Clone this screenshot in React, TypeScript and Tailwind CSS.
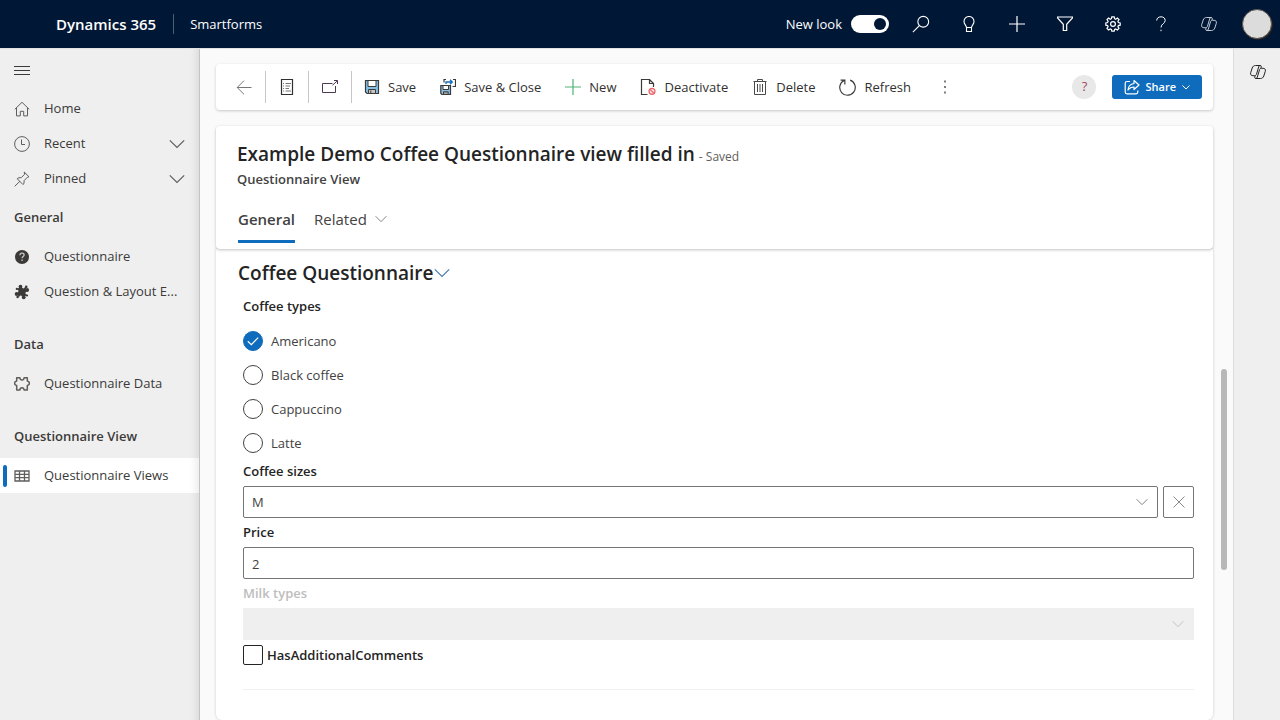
import type { ReactNode } from "react";

type IconProps = { className?: string; children: ReactNode; box?: number };

function Icon({ className = "", children, box = 16 }: IconProps) {
  return (
    <svg
      viewBox={`0 0 ${box} ${box}`}
      className={`shrink-0 ${className}`}
      fill="none"
      stroke="currentColor"
      strokeWidth="1"
      aria-hidden="true"
    >
      {children}
    </svg>
  );
}

function Chevron({ className = "" }: { className?: string }) {
  return (
    <Icon className={className}>
      <path d="M0.8 4.3 8 11.5l7.200-7.200" strokeWidth="1.200" />
    </Icon>
  );
}

function Copilot({ className = "" }: { className?: string }) {
  return (
    <Icon className={className}>
      <path d="M10.800 4.200 11.400 2.800C11.400 1.900 10.800 1.500 10 1.500H5.600C3.900 1.500 2.700 2.400 2.200 4L.7 8.700C.2 10.500 1.100 11.700 2.900 11.700H4.500C5.600 11.700 6.200 11.200 6.500 10.200L8.700 2.800C8.900 2 9.400 1.500 10 1.500" />
      <path d="M5.200 11.800 4.600 13.200C4.600 14.100 5.200 14.500 6 14.500H10.400C12.100 14.500 13.300 13.600 13.800 12L15.300 7.300C15.800 5.500 14.900 4.300 13.100 4.300H11.500C10.400 4.300 9.800 4.800 9.500 5.800L7.300 13.200C7.100 14 6.600 14.500 6 14.500" />
    </Icon>
  );
}

const homeIcon = (
  <Icon className="size-4 text-[#605e5c]">
    <path d="M.8 8.300 8 1.300l7.200 7M2.500 6.900v8h3.800v-4.600h3.400v4.600h3.800v-8" />
  </Icon>
);
const clockIcon = (
  <Icon className="size-4 text-[#605e5c]">
    <circle cx="8" cy="8" r="7.400" />
    <path d="M7.500 3.500v5h3.500" />
  </Icon>
);
const pinIcon = (
  <Icon className="size-4 text-[#605e5c]">
    <path d="m10.200 1 4.800 4.800-1.500.4-3.300 3.300-.3 3.200-1 .8-5.600-5.600.8-1 3.200-.3 3.300-3.300ZM6 10.200.7 15.300" />
  </Icon>
);
const questionIcon = (
  <Icon className="size-4">
    <circle cx="8" cy="8" r="7" fill="#3b3a39" stroke="none" />
    <path d="M5.900 6.200c.1-1.300 1-2 2.100-2 1.200 0 2.100.7 2.100 1.800 0 1.500-2 1.600-2 3.300M8.100 10.500v1.600" stroke="#c8c8c8" strokeWidth="1.300" />
  </Icon>
);
const puzzleIcon = (
  <Icon className="size-4">
    <g stroke="none" fill="#3b3a39">
      <path d="m3.200 4.200 8.600-1 1 8.600-8.600 1Z" />
      <circle cx="6.500" cy="2.600" r="1.900" />
      <circle cx="13.200" cy="6" r="1.900" />
      <circle cx="9.700" cy="13.300" r="1.900" />
      <circle cx="2.600" cy="10" r="1.900" />
      <circle cx="12.200" cy="2.900" r="1.300" />
      <circle cx="3.600" cy="13" r="1.200" />
      <circle cx="2.800" cy="4.900" r="1.100" />
      <circle cx="13" cy="11.500" r="1.100" />
    </g>
    <g stroke="none" fill="#efefef">
      <circle cx="9.400" cy="3.300" r="1.100" />
      <circle cx="12.500" cy="9.200" r="1.100" />
      <circle cx="6.700" cy="12.700" r="1.100" />
      <circle cx="3.400" cy="7" r="1.100" />
    </g>
  </Icon>
);
const puzzleOutlineIcon = (
  <Icon className="size-4 text-[#605e5c]">
    <path
      d="M2.700 1.700h3.200c.1 1.500.8 2.300 2.100 2.300s2-.8 2.100-2.300h3.200v3.300c1.300.2 2.100 1 2.100 2.200s-.8 2-2.100 2.200v4.500h-3.200c-.1-1.400-.8-2.200-2.100-2.200s-2 .8-2.100 2.200H2.700V9.400C1.400 9.200.6 8.400.6 7.200s.8-2 2.100-2.200Z"
      strokeWidth="1.500"
      strokeLinejoin="round"
    />
  </Icon>
);
const tableIcon = (
  <Icon className="size-4 text-[#605e5c]">
    <path d="M1 3h14v10H1ZM1 6.300h14M1 9.700h14M5.500 3v10M10.500 3v10" strokeWidth="1.300" />
  </Icon>
);

type NavItem = { label: string; icon: ReactNode; expandable?: boolean; active?: boolean };

const navGroups: { title?: string; items: NavItem[] }[] = [
  {
    items: [
      { label: "Home", icon: homeIcon },
      { label: "Recent", icon: clockIcon, expandable: true },
      { label: "Pinned", icon: pinIcon, expandable: true },
    ],
  },
  {
    title: "General",
    items: [
      { label: "Questionnaire", icon: questionIcon },
      { label: "Question & Layout E...", icon: puzzleIcon },
    ],
  },
  { title: "Data", items: [{ label: "Questionnaire Data", icon: puzzleOutlineIcon }] },
  { title: "Questionnaire View", items: [{ label: "Questionnaire Views", icon: tableIcon, active: true }] },
];

function TopBar() {
  return (
    <header className="flex h-12 shrink-0 items-center bg-[#001736] text-white">
      <a href="#home" className="ml-14 text-[15px] font-semibold">Dynamics 365</a>
      <span className="ml-[17px] h-5 w-px bg-[#4d5d74]" />
      <a href="#app" className="ml-4 pt-[2px] text-[13px]">Smartforms</a>
      <div className="ml-auto flex items-center">
        <label htmlFor="new-look" className="mr-[9px] pt-[2px] text-[13px]">New look</label>
        <span className="relative flex">
          <input
            id="new-look"
            type="checkbox"
            role="switch"
            defaultChecked
            className="h-[18px] w-[38px] appearance-none rounded-full bg-white"
          />
          <span className="pointer-events-none absolute top-[3px] right-[3px] size-3 rounded-full bg-[#001736]" />
        </span>
        <div className="ml-2 flex">
          <button aria-label="Search" className="flex h-12 w-12 items-center justify-center">
            <Icon className="size-[18px]"><circle cx="10" cy="6" r="4.800" /><path d="M6.500 9.500.8 15.200" /></Icon>
          </button>
          <button aria-label="Insights" className="flex h-12 w-12 items-center justify-center">
            <Icon className="size-4">
              <path d="M5.500 11.500c0-2-2.500-3-2.500-6a5 5 0 0 1 10 0c0 3-2.500 4-2.500 6ZM5.500 11.500v4h5v-4" strokeWidth="1.100" />
            </Icon>
          </button>
          <button aria-label="Add" className="flex h-12 w-12 items-center justify-center">
            <Icon className="size-4"><path d="M8 0v16M0 8h16" strokeWidth="1.200" /></Icon>
          </button>
          <button aria-label="Filter" className="flex h-12 w-12 items-center justify-center">
            <Icon className="size-4"><path d="M.5 1h15v1L9.700 8.300v6.200H6.300V8.300L.5 2Z" strokeWidth="1.200" /></Icon>
          </button>
          <button aria-label="Settings" className="flex h-12 w-12 items-center justify-center">
            <Icon className="size-4">
              <path d="M6.800.8h2.400l.4 1.900 1.100.5 1.700-1.100 1.600 1.600-1.100 1.700.5 1.100 1.800.4v2.300l-1.800.4-.5 1.100 1.100 1.700-1.600 1.600-1.700-1.100-1.100.5-.4 1.800H6.800l-.4-1.800-1.100-.5L3.600 14 2 12.400l1.100-1.700-.5-1.100-1.800-.4V6.900l1.800-.4.5-1.100L2 3.700l1.600-1.600 1.700 1.100 1.100-.5Z" strokeWidth="1.200" />
              <circle cx="8" cy="8" r="2.400" strokeWidth="1.200" />
            </Icon>
          </button>
          <button aria-label="Help" className="flex h-12 w-12 items-center justify-center">
            <Icon className="size-4">
              <path d="M3.700 4.500C3.800 2.200 5.500.8 8 .8s4.200 1.500 4.200 3.700C12.200 7.800 8 7.600 8 11.500M8 13.700v1.500" />
            </Icon>
          </button>
          <button aria-label="Copilot" className="flex h-12 w-12 items-center justify-center">
            <Copilot className="size-4 text-[#c3c9d2]" />
          </button>
          <button aria-label="Account" className="flex h-12 w-[47px] items-center justify-center">
            <span className="size-[30px] rounded-full border border-[#56534d] bg-[#dcdcdc] shadow-[1px_1px_0_0_#222222]" />
          </button>
        </div>
      </div>
    </header>
  );
}

function Sidebar() {
  return (
    <nav className="w-[200px] shrink-0 overflow-hidden border-r border-[#c4c4c4] bg-[#efefef] text-[13px] text-[#3b3a39] shadow-[inset_-12px_0_10px_-10px_#00000018]">
      <button aria-label="Collapse navigation" className="flex h-[42px] items-center px-[14px]">
        <Icon className="size-4"><path d="M0 4.500h16M0 8.500h16M0 12.500h16" /></Icon>
      </button>
      {navGroups.map((group, i) => (
        <section key={i} className={i > 1 ? "mt-[14px]" : ""}>
          {group.title && <h2 className="flex h-[43px] items-center px-[14px] font-semibold">{group.title}</h2>}
          <ul>
            {group.items.map((item) => (
              <li key={item.label}>
                <a
                  href="#nav"
                  className={`relative flex h-[35px] items-center gap-[14px] px-[14px] ${
                    item.active ? "bg-white shadow-[inset_-12px_0_10px_-10px_#00000018]" : ""
                  }`}
                >
                  {item.active && <span className="absolute left-[3px] h-[22px] w-1 rounded-sm bg-[#0f6cbd]" />}
                  {item.icon}
                  <span className="flex-1 whitespace-nowrap">{item.label}</span>
                  {item.expandable && <Chevron className="size-4 text-[#605e5c]" />}
                </a>
              </li>
            ))}
          </ul>
        </section>
      ))}
    </nav>
  );
}

const commands: { label: string; icon: ReactNode }[] = [
  {
    label: "Save",
    icon: (
      <Icon className="size-4">
        <path d="M1.500 1.500h13v13H3l-1.500-1.500Z" fill="#86bfe6" stroke="#3b3a39" strokeWidth="1.200" />
        <path d="M4 1.500h8v6H4Z" fill="#fff" stroke="#3b3a39" />
        <path d="M4.500 14.500v-4h7v4Z" fill="#c8c6c4" stroke="#3b3a39" />
        <path d="M6.800 11.500v3" stroke="#3b3a39" />
      </Icon>
    ),
  },
  {
    label: "Save & Close",
    icon: (
      <Icon className="size-4">
        <path d="M4 3.500V.5h2M13 .5h2.500v7H12.500" stroke="#3b3a39" strokeWidth="1.200" />
        <path d="M6 5V3h6M10 .8 12.300 3 10 5.200" stroke="#0f6cbd" strokeWidth="1.300" />
        <path d="M.8 6.500h9.700v9H2L.8 14.400Z" fill="#86bfe6" stroke="#3b3a39" strokeWidth="1.200" />
        <path d="M3 6.500h5.500v4H3Z" fill="#fff" stroke="#3b3a39" />
        <path d="M3.500 15.500v-2.700h4.700v2.700Z" fill="#a6a4a2" stroke="#3b3a39" />
      </Icon>
    ),
  },
  { label: "New", icon: <Icon className="size-4 text-[#4fb274]"><path d="M8 0v16M0 8h16" strokeWidth="1.200" /></Icon> },
  {
    label: "Deactivate",
    icon: (
      <Icon className="size-4">
        <path d="M7.500 15.500h-6V.5h8l4 4V8M9.500.5v4h4" stroke="#3b3a39" strokeWidth="1.200" />
        <circle cx="12" cy="12.300" r="3" stroke="#ea6468" strokeWidth="1.200" fill="#fbe0e1" />
        <path d="m10 10.300 4 4" stroke="#ea6468" strokeWidth="1.200" />
      </Icon>
    ),
  },
  {
    label: "Delete",
    icon: (
      <Icon className="size-4">
        <path d="M1.500 2.500h13M5.500 2.500V.5h5v2M2.500 2.500v13h11v-13M5.500 5v8M8 5v8M10.500 5v8" stroke="#4a4948" />
      </Icon>
    ),
  },
  {
    label: "Refresh",
    icon: (
      <Icon className="size-[17px]">
        <path d="M10.500 1.100a7.300 7.300 0 1 1-5.700.3M1.500 1.100h4v4" stroke="#3b3a39" strokeWidth="1.100" />
      </Icon>
    ),
  },
];

function CommandBar() {
  return (
    <div className="flex h-[46px] shrink-0 items-center rounded bg-white pr-[11px] pl-[7px] text-[13px] text-[#323130] shadow-[0_1px_3px_#00000033]">
      <button aria-label="Back" className="flex h-8 w-[42px] items-center justify-center text-[#797775]">
        <Icon className="size-4"><path d="M15.500 8.500H1M8 1.700 1.200 8.500 8 15.300" /></Icon>
      </button>
      <button aria-label="Show form selector" className="flex h-8 w-[43px] items-center justify-center border-l border-[#c8c6c4]">
        <Icon className="size-4">
          <path d="M2.500.5h11v15h-11Z" strokeWidth="1.200" />
          <path d="M4 4.500h1M6.500 4.500H12M4 7h1M6.500 7H11M4 9.500h1M6.500 9.500H10M4 12h1M6.500 12H12" stroke="#797775" />
        </Icon>
      </button>
      <button aria-label="Open in new window" className="flex h-8 w-[43px] items-center justify-center border-l border-[#c8c6c4]">
        <Icon className="size-4 text-[#4d3a52]">
          <path d="M10.500 4.500h-10v9h13V7M10.500 6.200l5-4.500M12 1.500h3.500V5" />
        </Icon>
      </button>
      <div className="flex h-8 items-center border-l border-[#c8c6c4]">
        {commands.map((c) => (
          <button key={c.label} className="flex items-center gap-2 px-3 whitespace-nowrap">
            {c.icon}
            <span className="pt-[2px]">{c.label}</span>
          </button>
        ))}
      </div>
      <button aria-label="More commands" className="flex h-8 w-11 items-center justify-center">
        <Icon className="size-4 text-[#605e5c]">
          <path d="M8 1.500v2M8 7v2M8 12.500v2" strokeWidth="1.600" />
        </Icon>
      </button>
      <button aria-label="Help" className="ml-auto flex size-6 items-center justify-center rounded-full bg-[#e8e8e8] text-[13px] text-[#a4465c]">
        ?
      </button>
      <button className="ml-4 flex h-6 items-center rounded-[3px] bg-[#0f6cbd] px-3 text-[11px] font-semibold text-white">
        <Icon className="mr-[5px] size-4">
          <path d="M6 2.500H3A1.800 1.800 0 0 0 1.200 4.300V13A1.800 1.800 0 0 0 3 14.800h9A1.800 1.800 0 0 0 13.800 13v-1.500" strokeWidth="1.200" />
          <path d="M10 1.500 15 6l-5 4.500V8C7.500 8 5.500 9 4 11c.3-3.500 2.300-6 6-6.500Z" strokeLinejoin="round" strokeWidth="1.200" />
        </Icon>
        <span className="pt-px">Share</span>
        <Icon className="ml-[6px] size-2" box={8}><path d="m.5 2.500L4 6l3.500-3.500" /></Icon>
      </button>
    </div>
  );
}

function RecordHeader() {
  return (
    <div className="relative mt-4 flex h-[123px] shrink-0 flex-col rounded bg-white px-[21px] pt-[14px] shadow-[0_1px_3px_#00000040]">
      <div className="flex items-baseline gap-1">
        <h1 className="text-[19px] leading-[28px] font-semibold text-[#242424]">Example Demo Coffee Questionnaire view filled in</h1>
        <span className="text-[12px] text-[#605e5c]">- Saved</span>
      </div>
      <p className="text-[13px] leading-[22px] font-semibold text-[#424242]">Questionnaire View</p>
      <div role="tablist" className="mt-auto mb-[6px] flex gap-[19px] px-px text-[15px] text-[#424242]">
        <button role="tab" aria-selected="true" className="h-[35px] border-b-[3px] border-[#0f6cbd] pb-[10px] font-semibold">
          General
        </button>
        <button role="tab" aria-selected="false" className="flex h-[35px] items-center gap-2 border-b-[3px] border-transparent pb-[10px]">
          Related
          <Chevron className="size-3 text-[#797775]" />
        </button>
      </div>
    </div>
  );
}

const coffeeTypes = ["Americano", "Black coffee", "Cappuccino", "Latte"];

function FormSection() {
  return (
    <form className="flex-1 overflow-hidden rounded-b-md bg-white pr-[19px] pl-[27px] text-[13px] text-[#242424] shadow-[0_0_3px_#00000033]">
      <h2 className="-ml-[5px] flex h-[43px] items-center gap-px pt-[5px] text-[19px] font-semibold">
        Coffee Questionnaire
        <Chevron className="size-4 text-[#4a7ba8]" />
      </h2>
      <fieldset>
        <legend className="flex h-[29px] items-center font-semibold">Coffee types</legend>
        <div className="flex flex-col gap-[14px] pt-[10px] pb-1">
          {coffeeTypes.map((type) => (
            <label key={type} className="flex h-5 items-center gap-2 self-start text-[#424242]">
              <span className="relative flex size-5 items-center justify-center">
                <input
                  type="radio"
                  name="coffee-type"
                  defaultChecked={type === "Americano"}
                  className="peer size-5 appearance-none rounded-full border border-[#424242] checked:border-[#0f6cbd] checked:bg-[#0f6cbd]"
                />
                <svg
                  viewBox="0 0 12 12"
                  className="pointer-events-none absolute hidden size-3 text-white peer-checked:block"
                  fill="none"
                  stroke="currentColor"
                  aria-hidden="true"
                >
                  <path d="M.8 6.300 4.300 9.700 11.200 2.700" strokeWidth="1.200" />
                </svg>
              </span>
              <span className="pt-[2px]">{type}</span>
            </label>
          ))}
        </div>
      </fieldset>
      <label htmlFor="coffee-size" className="flex h-[29px] items-center pt-px font-semibold">Coffee sizes</label>
      <div className="flex gap-[5px]">
        <div className="relative flex-1">
          <select id="coffee-size" defaultValue="M" className="h-8 w-full appearance-none rounded-xs border border-[#757575] bg-white px-2 pt-[2px] text-[#424242]">
            <option>S</option>
            <option>M</option>
            <option>L</option>
          </select>
          <Chevron className="pointer-events-none absolute top-[10px] right-[10px] size-3 text-[#757575]" />
        </div>
        <button type="button" aria-label="Clear coffee size" className="flex h-8 w-[31px] items-center justify-center rounded-xs border border-[#757575] text-[#8a8886]">
          <Icon className="size-3" box={12}><path d="m.5.500 11 11M11.500.5l-11 11" /></Icon>
        </button>
      </div>
      <label htmlFor="price" className="flex h-[29px] items-center pt-px font-semibold">Price</label>
      <input id="price" type="text" defaultValue="2" className="block h-8 w-full rounded-xs border border-[#757575] px-2 pt-[2px] text-[#424242]" />
      <label htmlFor="milk-type" className="flex h-[29px] items-center pt-px font-semibold text-[#bdbdbd]">Milk types</label>
      <div className="relative">
        <select id="milk-type" disabled className="block h-8 w-full appearance-none bg-[#efefef] px-2" />
        <Chevron className="pointer-events-none absolute top-[10px] right-[10px] size-3 text-[#bdbdbd]" />
      </div>
      <div className="mt-[5px] flex items-center gap-1 border-b border-[#f0f0f0] pb-[23px]">
        <input id="extra-comments" type="checkbox" className="size-5 appearance-none rounded-xs border border-[#242424] checked:bg-[#0f6cbd]" />
        <label htmlFor="extra-comments" className="pt-px font-semibold">HasAdditionalComments</label>
      </div>
    </form>
  );
}

export default function App() {
  return (
    <div className="flex h-screen flex-col overflow-hidden bg-[#fafafa] font-['Open_Sans','Noto_Sans',sans-serif]">
      <TopBar />
      <div className="flex min-h-0 flex-1 border-t border-[#e3e3e6]">
        <Sidebar />
        <main className="flex min-w-0 flex-1 flex-col pt-[15px] pl-4">
          <CommandBar />
          <RecordHeader />
          <FormSection />
        </main>
        <div aria-hidden="true" className="flex w-5 shrink-0 flex-col items-center pl-[2px]">
          <span className="flex-[320]" />
          <span className="w-[6px] flex-[201] rounded-full bg-[#b8b8b8]" />
          <span className="flex-[150]" />
        </div>
        <aside className="w-[47px] shrink-0 border-l border-[#dcdcdc] bg-[#efefef]">
          <button aria-label="Open Copilot pane" className="flex h-[46px] w-12 items-center justify-center text-[#242424]">
            <Copilot className="size-4" />
          </button>
        </aside>
      </div>
    </div>
  );
}
